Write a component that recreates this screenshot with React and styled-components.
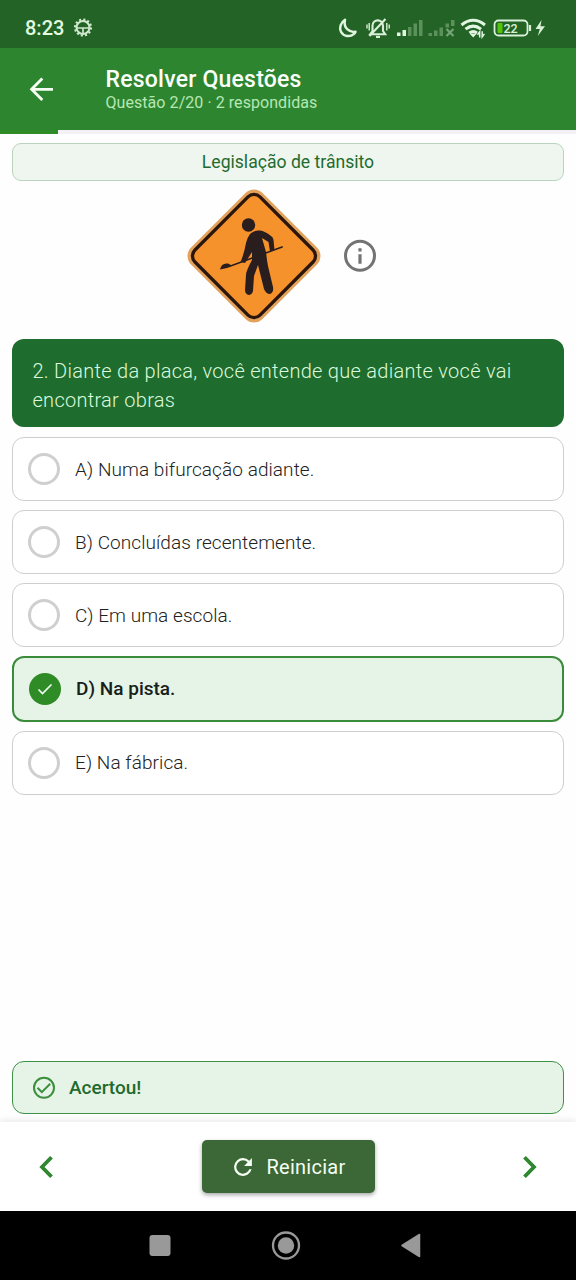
import React from "react";
import styled, { createGlobalStyle } from "styled-components";

const Global = createGlobalStyle`
  * { box-sizing: border-box; }
  body { margin: 0; background: #fff; font-family: Roboto, "Liberation Sans", sans-serif; }
  svg { display: block; flex: none; }
`;

const Screen = styled.div`
  width: 576px;
  height: 1280px;
  display: flex;
  flex-direction: column;
  background: #fefefe;
  overflow: hidden;
`;

const StatusBar = styled.div`
  height: 48px;
  flex: none;
  display: flex;
  align-items: center;
  justify-content: space-between;
  padding: 8px 27px 0 25px;
  background: #236325;
`;

const Clock = styled.div`
  display: flex;
  align-items: center;
  gap: 9px;
  font-size: 20px;
  font-weight: 500;
  line-height: 24px;
  color: #e2fbe0;
`;

const AppBar = styled.header`
  height: 82px;
  flex: none;
  display: flex;
  align-items: center;
  padding-left: 25px;
  background: #2e8530;
`;

const Titles = styled.div`
  margin-left: 48.5px;
  padding-top: 1px;
`;

const Title = styled.h1`
  margin: 0;
  font-size: 23px;
  font-weight: 500;
  line-height: 26px;
  letter-spacing: 0.22px;
  color: #fbfffa;
`;

const Subtitle = styled.div`
  font-size: 16px;
  line-height: 20px;
  letter-spacing: 0.06px;
  color: #b5e8b3;
`;

const Progress = styled.div`
  height: 4px;
  flex: none;
  background: #f3f1f3;
`;

const ProgressFill = styled.div`
  width: 58px;
  height: 4px;
  background: #2e8b26;
`;

const Content = styled.main`
  flex: 1;
  display: flex;
  flex-direction: column;
  padding: 9px 12px 8px;
`;

const Category = styled.div`
  height: 38px;
  display: flex;
  align-items: center;
  justify-content: center;
  border: 1px solid #bad3bd;
  border-radius: 9px;
  background: #eef6ef;
  color: #1f6b2e;
  font-size: 17.6px;
`;

const Figure = styled.div`
  height: 134px;
  margin: 8px 0 16px;
  display: flex;
  align-items: center;
  justify-content: center;
  gap: 22px;
  padding-right: 12px;
`;

const Question = styled.div`
  height: 88px;
  padding: 17.5px 20.5px;
  border-radius: 12px;
  background: #1e6c2e;
  color: #dbfadb;
  font-size: 20px;
  font-weight: 300;
  line-height: 29px;
  letter-spacing: 0.28px;
`;

const Options = styled.div`
  display: flex;
  flex-direction: column;
  gap: 9px;
  margin-top: 10px;
`;

const Option = styled.div`
  height: ${(p) => (p.$selected ? 65.5 : 64)}px;
  display: flex;
  align-items: center;
  gap: 15px;
  padding-left: 15px;
  border: ${(p) => (p.$selected ? "2px solid #3a8c3a" : "1px solid #cfcdd0")};
  border-radius: 12px;
  background: ${(p) => (p.$selected ? "#e6f4e7" : "#fff")};
  color: ${(p) => (p.$selected ? "#17201a" : "#222")};
  font-size: 19px;
  font-weight: ${(p) => (p.$selected ? 500 : 300)};
  letter-spacing: ${(p) => (p.$selected ? 0 : 0.07)}px;
`;

const Radio = styled.div`
  width: 32px;
  height: 32px;
  display: flex;
  align-items: center;
  justify-content: center;
  border-radius: 50%;
  border: ${(p) => (p.$selected ? "none" : "3px solid #cfcfcf")};
  background: ${(p) => (p.$selected ? "#2e8b26" : "transparent")};
`;

const Feedback = styled.div`
  height: 53px;
  margin-top: auto;
  display: flex;
  align-items: center;
  gap: 13px;
  padding-left: 19px;
  border: 1.5px solid #3f9147;
  border-radius: 12px;
  background: #e6f4e7;
  color: #1f6b2e;
  font-size: 19px;
  font-weight: 500;
`;

const Footer = styled.footer`
  height: 89px;
  flex: none;
  display: flex;
  align-items: center;
  justify-content: space-between;
  padding: 0 37px;
  background: #fff;
  box-shadow: 0 -2px 6px rgba(0, 0, 0, 0.08);
`;

const RestartButton = styled.button`
  width: 173px;
  height: 53px;
  display: flex;
  align-items: center;
  gap: 14px;
  padding: 0 0 0 31px;
  border: none;
  border-radius: 5px;
  background: #3c6838;
  box-shadow: 0 2px 4px rgba(0, 0, 0, 0.35);
  color: #f5fff3;
  font: 400 20px Roboto, sans-serif;
  letter-spacing: 0.25px;
`;

const NavBar = styled.nav`
  height: 69px;
  flex: none;
  background: #000;
  display: flex;
  align-items: center;
  justify-content: center;
  padding-right: 6px;
  gap: 99px;
`;

const StatusIcons = () => (
  <svg width="212" height="24" viewBox="0 0 212 24" fill="none">
    <path d="M8 3.700C3.500 6.500 2.100 12.100 4 15.800c2.400 4.800 9 5.500 12.700 2.300 1-.9 1.500-1.600 1.800-2.400-5.400 1-12.500-3-10.500-12Z" stroke="#e0f5df" strokeWidth="2.500" strokeLinejoin="round" />
    <g stroke="#d9f0d8" strokeWidth="2.100">
      <path d="M35.500 15V10c0-7.500 10.500-7.500 10.500 0v5l2.200 3.200H33.200zM32.500 20 48.500 3" />
      <path d="M39 20.900h4" strokeWidth="2.200" />
      <path d="M32.200 7v7.500M49.800 7v7.500M30 8.500v4M52.200 8.500v4" strokeWidth="1.400" />
    </g>
    <path d="M60 16.500h3.500V20H60zM65.500 14H69v6h-3.500z" fill="#e2f6e1" />
    <path d="M71 11h3.500v9H71zM76.500 7.500H80V20h-3.500zM82 4h3.500v16H82z" fill="#5c915c" />
    <path d="M91.500 17H95v3h-3.500zM97 14.500h3.500V20H97zM102.500 11.500h3.500V20h-3.500zM108.500 7.500h3.500v4h-3.500zM114 4h3.500v6H114z" fill="#5c915c" />
    <path d="m109.500 13 7 7m0-7-7 7" stroke="#75a475" strokeWidth="2.200" />
    <g stroke="#e2f6e1" strokeWidth="3">
      <path d="M124.500 9c7.500-6 16-6 23.500 0M128.500 13.200c5-4 10.500-4 15.500 0" />
      <path d="M132.500 17c2.500-2 5-2 7.500 0" />
    </g>
    <path d="m132.500 17.500 3.700 4 3.700-4z" fill="#e2f6e1" />
    <path d="m140.500 18.800 2.200-3v5.700M145.200 15.200v5.700l2.200-3" stroke="#e2f6e1" strokeWidth="1.500" />
    <rect x="157.500" y="4.500" width="33" height="15" rx="4" stroke="#d9f0d8" strokeWidth="1.800" />
    <path d="M193 9v6" stroke="#d9f0d8" strokeWidth="2.200" />
    <rect x="160.500" y="7" width="5" height="10" rx="1" fill="#54c30b" />
    <text x="166.500" y="16.500" fontSize="12.500" fontWeight="500" fontFamily="Roboto" fill="#d9f0d8">22</text>
    <path d="m204.500 4-6 9h4.300L200.800 20l7.200-9.800h-4.500z" fill="#d9f0d8" />
  </svg>
);

const GearIcon = () => (
  <svg width="20" height="20" viewBox="0 0 20 20" fill="none" stroke="#cfe8ce">
    <circle cx="10" cy="9.500" r="8" strokeWidth="2.200" strokeDasharray="2.100 2.090" />
    <circle cx="10" cy="9.500" r="6.500" strokeWidth="2.100" />
    <path d="M4 10h12M10 10v6" strokeWidth="1.700" />
  </svg>
);

const BackArrow = () => (
  <svg width="32" height="32" viewBox="0 0 32 32" fill="none" stroke="#f7fff5" strokeWidth="2.800">
    <path d="M28 16.300H7M17.300 5.600 6.600 16.300l10.700 10.700" />
  </svg>
);

const RoadSign = () => (
  <svg width="134" height="134" viewBox="0 0 134 134">
    <rect x="16.500" y="16.500" width="101" height="101" rx="12" transform="rotate(45 67 67)" fill="#e3a25a" />
    <rect x="21" y="21" width="92" height="92" rx="8.500" transform="rotate(45 67 67)" fill="#f6922c" stroke="#2b160d" strokeWidth="3.300" />
    <g fill="#2a1d1e">
      <circle cx="61.500" cy="36" r="6.700" />
      <path d="M63 45Q67 41 73 41.500Q78 42 84 47Q86 48 86.500 51L87.500 61L83 62.500L81.500 53L75 49L79 63Q80 72 81 77L86 98Q87 103 83 105Q79 105 77 100L71 76L67 87L66 102Q65 106 61.500 106Q58 105 58 101L59 86Q59 82 65 71V63L58 74L53.500 73Q57 65 59 54Q60 49 63 45Z" />
      <path d="M33 80.500Q34.500 73.500 41 74.500L44 76L95.500 57L96 58.500L43 78L40 79Z" />
    </g>
  </svg>
);

const InfoIcon = () => (
  <svg width="34" height="34" viewBox="0 0 34 34">
    <circle cx="17" cy="16.700" r="14.500" fill="none" stroke="#737373" strokeWidth="3" />
    <path d="M15.400 9.200h3.200v3.200h-3.200zM15.400 15.200h3.200v9.500h-3.200z" fill="#737373" />
  </svg>
);

const Check = () => (
  <svg width="16" height="14" viewBox="0 0 16 14" fill="none" stroke="#f0fff0" strokeWidth="1.700">
    <path d="m1.500 7.500 4 4L14.500 2.500" />
  </svg>
);

const CheckCircle = () => (
  <svg width="24" height="24" viewBox="0 0 24 24" fill="none" stroke="#3b8e3c" strokeWidth="2">
    <circle cx="12" cy="11.800" r="10" />
    <path d="m5.500 11.800 4.300 4.300L18.200 7.800" />
  </svg>
);

const Chevron = ({ flip }) => (
  <svg width="18" height="24" viewBox="0 0 18 24" fill="none" stroke="#2f8730" strokeWidth="3.800">
    <path d={flip ? "M3.500 2.200 13 12 3.500 21.800" : "M14.500 2.200 5 12 14.500 21.800"} />
  </svg>
);

const Refresh = () => (
  <svg width="20" height="20" viewBox="3 3 18 18" fill="#f5fff3">
    <path d="M17.650 6.350A7.960 7.960 0 0 0 12 4a8 8 0 1 0 7.730 10h-2.080A6 6 0 1 1 12 6c1.660 0 3.140.690 4.220 1.780L13 11h7V4z" />
  </svg>
);

const options = [
  "A) Numa bifurcação adiante.",
  "B) Concluídas recentemente.",
  "C) Em uma escola.",
  "D) Na pista.",
  "E) Na fábrica.",
];
const selectedIndex = 3;

export default function App() {
  return (
    <Screen>
      <Global />
      <StatusBar>
        <Clock>8:23<GearIcon /></Clock>
        <StatusIcons />
      </StatusBar>
      <AppBar>
        <BackArrow />
        <Titles>
          <Title>Resolver Questões</Title>
          <Subtitle>Questão 2/20 · 2 respondidas</Subtitle>
        </Titles>
      </AppBar>
      <Progress><ProgressFill /></Progress>
      <Content>
        <Category>Legislação de trânsito</Category>
        <Figure>
          <RoadSign />
          <InfoIcon />
        </Figure>
        <Question>2. Diante da placa, você entende que adiante você vai encontrar obras</Question>
        <Options>
          {options.map((label, i) => (
            <Option key={label} $selected={i === selectedIndex}>
              <Radio $selected={i === selectedIndex}>{i === selectedIndex && <Check />}</Radio>
              {label}
            </Option>
          ))}
        </Options>
        <Feedback><CheckCircle />Acertou!</Feedback>
      </Content>
      <Footer>
        <Chevron />
        <RestartButton><Refresh />Reiniciar</RestartButton>
        <Chevron flip />
      </Footer>
      <NavBar>
        <svg width="24" height="24" viewBox="0 0 24 24"><rect x="1.500" y="1" width="21" height="21" rx="3" fill="#999" /></svg>
        <svg width="30" height="30" viewBox="0 0 30 30">
          <circle cx="15" cy="14.500" r="13" fill="none" stroke="#999" strokeWidth="2.300" />
          <circle cx="15" cy="14.500" r="8.200" fill="#999" />
        </svg>
        <svg width="22" height="26" viewBox="0 0 22 26"><path d="M2 12.500 19.500 1.500v22z" fill="#999" stroke="#999" strokeWidth="1.500" strokeLinejoin="round" /></svg>
      </NavBar>
    </Screen>
  );
}
